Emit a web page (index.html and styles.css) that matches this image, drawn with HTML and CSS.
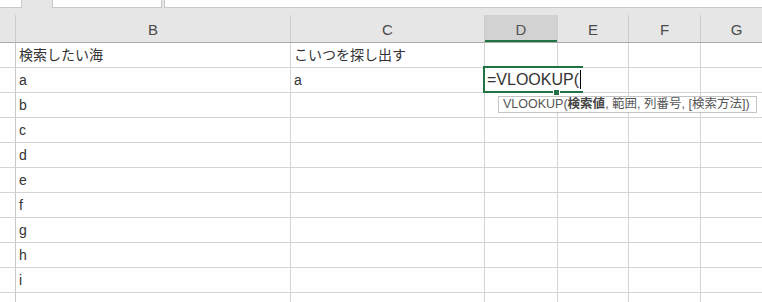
FILE: index.html
```html
<!DOCTYPE html>
<html lang="ja">
<head>
    <meta charset="UTF-8">
    <title>Sheet</title>
    <link rel="stylesheet" href="styles.css">
</head>
<body>
    <!-- tab strip -->
    <div class="tabs">
        <div class="tab tab-first"></div>
        <div class="tab tab-gap"></div>
        <div class="tab tab-mid"></div>
        <div class="tab tab-last"></div>
    </div>

    <!-- column headers -->
    <div class="grid header-row">
        <div class="hcell corner"></div>
        <div class="hcell">B</div>
        <div class="hcell">C</div>
        <div class="hcell selected">D</div>
        <div class="hcell">E</div>
        <div class="hcell">F</div>
        <div class="hcell">G</div>
    </div>

    <!-- rows -->
    <div class="grid row">
        <div class="cell rh"></div>
        <div class="cell">検索したい海</div>
        <div class="cell">こいつを探し出す</div>
        <div class="cell"></div>
        <div class="cell"></div>
        <div class="cell"></div>
        <div class="cell"></div>
    </div>
    <div class="grid row">
        <div class="cell rh"></div>
        <div class="cell">a</div>
        <div class="cell">a</div>
        <div class="cell active">
            <div class="editor">=VLOOKUP(<span class="caret"></span></div>
            <div class="handle"></div>
            <div class="tip">VLOOKUP(<b>検索値</b>, 範囲, 列番号, [検索方法])</div>
        </div>
        <div class="cell"></div>
        <div class="cell"></div>
        <div class="cell"></div>
    </div>
    <div class="grid row">
        <div class="cell rh"></div><div class="cell">b</div><div class="cell"></div><div class="cell"></div><div class="cell"></div><div class="cell"></div><div class="cell"></div>
    </div>
    <div class="grid row">
        <div class="cell rh"></div><div class="cell">c</div><div class="cell"></div><div class="cell"></div><div class="cell"></div><div class="cell"></div><div class="cell"></div>
    </div>
    <div class="grid row">
        <div class="cell rh"></div><div class="cell">d</div><div class="cell"></div><div class="cell"></div><div class="cell"></div><div class="cell"></div><div class="cell"></div>
    </div>
    <div class="grid row">
        <div class="cell rh"></div><div class="cell">e</div><div class="cell"></div><div class="cell"></div><div class="cell"></div><div class="cell"></div><div class="cell"></div>
    </div>
    <div class="grid row">
        <div class="cell rh"></div><div class="cell">f</div><div class="cell"></div><div class="cell"></div><div class="cell"></div><div class="cell"></div><div class="cell"></div>
    </div>
    <div class="grid row">
        <div class="cell rh"></div><div class="cell">g</div><div class="cell"></div><div class="cell"></div><div class="cell"></div><div class="cell"></div><div class="cell"></div>
    </div>
    <div class="grid row">
        <div class="cell rh"></div><div class="cell">h</div><div class="cell"></div><div class="cell"></div><div class="cell"></div><div class="cell"></div><div class="cell"></div>
    </div>
    <div class="grid row">
        <div class="cell rh"></div><div class="cell">i</div><div class="cell"></div><div class="cell"></div><div class="cell"></div><div class="cell"></div><div class="cell"></div>
    </div>
    <div class="grid row">
        <div class="cell rh"></div><div class="cell"></div><div class="cell"></div><div class="cell"></div><div class="cell"></div><div class="cell"></div><div class="cell"></div>
    </div>
</body>
</html>
```

FILE: styles.css
```css
body {
    margin: 0;
    font-family: "Liberation Sans", "Noto Sans CJK JP", sans-serif;
    background-color: #fff;
    color: #222;
    overflow: hidden;
    width: 762px;
    height: 302px;
}

.tabs {
    display: flex;
    height: 8px;
    background-color: #e6e6e6;
}

.tab {
    height: 7px;
    background-color: #fff;
    border: 1px solid #c9c9c9;
    border-top: none;
}

.tab-first {
    width: 21px;
    border-left: none;
}

.tab-gap {
    width: 30px;
    background-color: #e6e6e6;
    border: none;
}

.tab-mid {
    width: 108px;
    margin-right: 2px;
}

.tab-last {
    flex: 1;
    border-right: none;
}

.grid {
    display: grid;
    grid-template-columns: 16px 275px 194px 73px 71px 72px 72px;
}

.header-row {
    background-color: #e6e6e6;
    padding-top: 7px;
    border-bottom: 1px solid #ababab;
}

.hcell {
    height: 27px;
    box-sizing: border-box;
    border-right: 1px solid #cdcdcd;
    display: flex;
    align-items: center;
    justify-content: center;
    font-size: 15px;
    color: #4a4a4a;
    padding-top: 2px;
}

.hcell.selected {
    background-color: #d2d2d2;
    box-shadow: inset 0 -2px 0 #217346;
    color: #555;
}

.row {
    height: 25px;
}

.cell {
    position: relative;
    box-sizing: border-box;
    height: 25px;
    border-right: 1px solid #d4d4d4;
    border-bottom: 1px solid #d4d4d4;
    padding: 0 3px;
    font-size: 14px;
    line-height: 24px;
    color: #333;
    white-space: nowrap;
}

.cell.rh {
    border-right-color: #c8c8c8;
}

.editor {
    position: absolute;
    left: -2px;
    top: -2px;
    width: 96px;
    height: 23px;
    background-color: #fff;
    border: 2px solid #217346;
    border-right: none;
    padding-left: 2px;
    font-size: 16px;
    line-height: 23px;
    color: #333;
    z-index: 2;
}

.caret {
    display: inline-block;
    width: 1px;
    height: 19px;
    background-color: #000;
    vertical-align: -4px;
    margin-left: 1px;
}

.handle {
    position: absolute;
    left: 68px;
    top: 21px;
    width: 5px;
    height: 5px;
    background-color: #217346;
    border: 1px solid #fff;
    z-index: 3;
}

.tip {
    position: absolute;
    left: 13px;
    top: 28px;
    width: 253px;
    height: 15px;
    background-color: #fff;
    border: 1px solid #c4c4c4;
    padding-left: 4px;
    box-sizing: content-box;
    font-size: 12.5px;
    line-height: 15px;
    color: #555;
    z-index: 4;
    white-space: nowrap;
}

.tip b {
    font-weight: bold;
    color: #444;
}
```
